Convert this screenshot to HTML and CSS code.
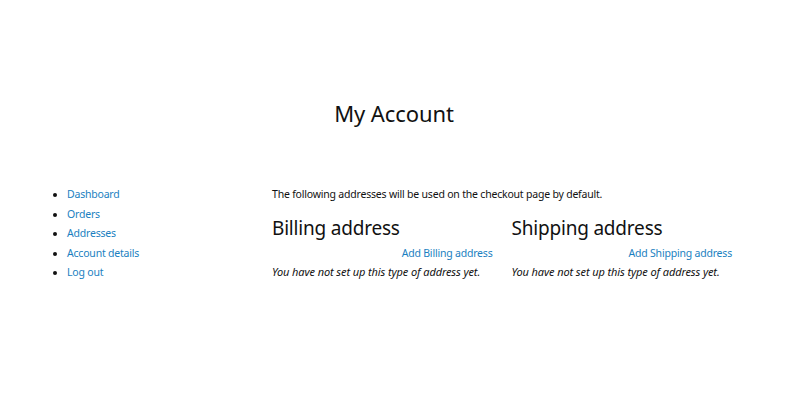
FILE: index.html
```html
<!DOCTYPE html>
<html lang="en">
<head>
    <meta charset="UTF-8">
    <meta name="viewport" content="width=device-width, initial-scale=1.0">
    <title>My Account</title>
    <link rel="stylesheet" href="styles.css">
</head>
<body>

<div class="page">
    <h1 class="page-title">My Account</h1>

    <div class="account">
        <nav class="account-nav">
            <ul>
                <li><a href="#">Dashboard</a></li>
                <li><a href="#">Orders</a></li>
                <li><a href="#">Addresses</a></li>
                <li><a href="#">Account details</a></li>
                <li><a href="#">Log out</a></li>
            </ul>
        </nav>

        <div class="account-content">
            <p class="intro">The following addresses will be used on the checkout page by default.</p>

            <div class="addresses">
                <div class="address">
                    <h2>Billing address</h2>
                    <a class="edit" href="#">Add Billing address</a>
                    <p class="empty">You have not set up this type of address yet.</p>
                </div>
                <div class="address">
                    <h2>Shipping address</h2>
                    <a class="edit" href="#">Add Shipping address</a>
                    <p class="empty">You have not set up this type of address yet.</p>
                </div>
            </div>
        </div>
    </div>
</div>

</body>
</html>
```

FILE: styles.css
```css
body {
    font-family: "Noto Sans", sans-serif;
    font-size: 10.5px;
    letter-spacing: -0.2px;
    color: #111;
    background-color: #fff;
    margin: 0;
}
a {
    color: #1a7fc1;
    text-decoration: none;
}
.page {
    width: 720px;
    margin: 0 auto;
    padding-top: 98px;
}
.page-title {
    font-size: 22px;
    font-weight: normal;
    letter-spacing: -0.1px;
    text-align: center;
    margin: 0 0 57px;
    padding-right: 12px;
}
.account {
    display: flex;
}
.account-nav {
    width: 232px;
}
.account-nav ul {
    margin: 0;
    padding-left: 27px;
}
.account-nav li {
    line-height: 19.5px;
}
.account-content {
    width: 460px;
}
.intro {
    margin: 0 0 10px;
    line-height: 19px;
}
.addresses {
    display: grid;
    grid-template-columns: 1fr 1fr;
    column-gap: 19px;
}
.address h2 {
    font-size: 19px;
    font-weight: normal;
    margin: 0 0 3px;
    line-height: 28px;
}
.address .edit {
    display: block;
    text-align: right;
    line-height: 17px;
}
.empty {
    font-size: 11px;
    font-style: italic;
    letter-spacing: -0.1px;
    margin: 0;
    line-height: 19px;
}
```
